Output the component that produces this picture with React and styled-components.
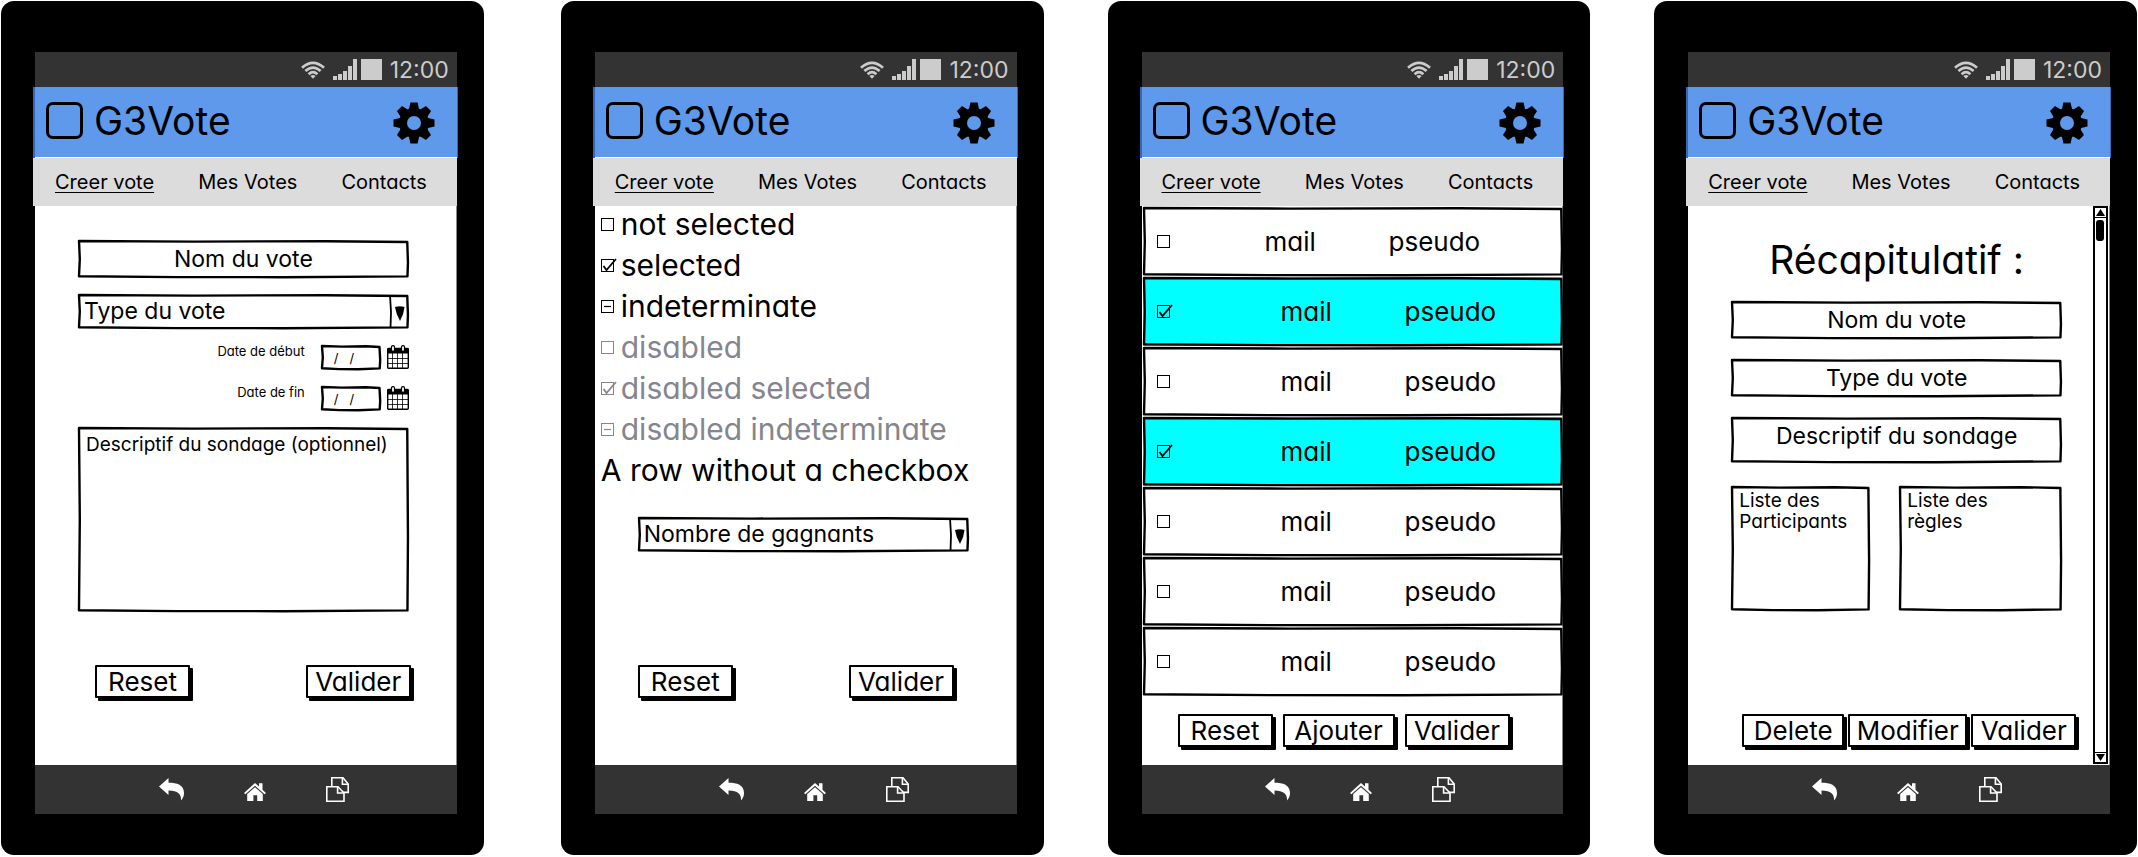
import React, { useEffect, useRef } from "react";
import styled, { createGlobalStyle, css } from "styled-components";

const GlobalStyle = createGlobalStyle`
  *, *::before, *::after { box-sizing: border-box; }
  body {
    margin: 0;
    background: #fff;
    color: #000;
    font-family: Inter, "Open Sans", sans-serif;
    font-feature-settings: "cv11";
  }
  button, input, select, textarea {
    margin: 0;
    font: inherit;
    font-feature-settings: inherit;
    color: inherit;
  }
`;

/* ---------- page and device ---------- */

const Board = styled.main`
  display: flex;
  flex-wrap: wrap;
  gap: 64px;
  min-height: 100vh;
  padding: 1px 1px 2px;
`;

const Device = styled.article`
  flex: 1 1 400px;
  min-width: 0;
  display: flex;
  flex-direction: column;
  padding: 51px 26px 41px 32px;
  border-radius: 13px;
  background: #000;

  &:first-child {
    margin-right: 13px;
  }
`;

const StatusBar = styled.div`
  display: flex;
  align-items: center;
  justify-content: flex-end;
  height: 35px;
  margin: 0 1px 0 2px;
  padding-right: 8px;
  background: #333;
  color: #ccc;
`;

const StatusIcons = styled.div`
  display: flex;
  align-items: center;
  gap: 8px;
`;

const SignalGroup = styled.div`
  display: flex;
  align-items: center;
  gap: 3px;
`;

const Battery = styled.span`
  width: 21px;
  height: 21px;
  background: #ccc;
`;

const Clock = styled.time`
  font-size: 23px;
  line-height: 24px;
`;

const AppHeader = styled.header`
  display: flex;
  align-items: center;
  height: 71px;
  padding: 0 22px 4px 11px;
  border: solid #3468b5;
  border-width: 0 1px 0 2px;
  box-shadow: inset 0 -1px 0 #fff;
  background: #5e99eb;
`;

const Logo = styled.span`
  width: 37px;
  height: 37px;
  margin-right: 11px;
  border: 3px solid #000;
  border-radius: 7px;
`;

const AppName = styled.h1`
  flex: 1;
  margin: 0;
  font-size: 39px;
  font-weight: 400;
  line-height: 40px;
`;

const IconButton = styled.button`
  display: flex;
  padding: 0;
  border: 0;
  background: none;
`;

const GearButton = styled(IconButton)`
  padding-top: 4px;
`;

const Tabs = styled.nav`
  display: flex;
  align-items: center;
  justify-content: space-between;
  height: 48px;
  margin-right: 1px;
  padding: 0 30px 0 22px;
  background: #dcdcdc;
`;

const Tab = styled.a`
  color: #000;
  font-size: 20px;
  line-height: 24px;
  text-decoration: ${(p) => (p.$active ? "underline" : "none")};
  text-decoration-thickness: 1px;
  text-underline-offset: 3px;
`;

const Screen = styled.section`
  flex: 1;
  display: flex;
  margin: 0 1px 0 2px;
  border-right: 1px solid #888;
  background: #fff;
`;

const Column = styled.div`
  flex: 1;
  min-width: 0;
  display: flex;
  flex-direction: column;
`;

const NavBar = styled.footer`
  display: flex;
  align-items: center;
  justify-content: center;
  gap: 60px;
  height: 49px;
  margin: 0 1px 0 2px;
  padding-left: 16px;
  background: #333;
`;

/* ---------- hand-drawn controls ---------- */

const Framed = styled.div`
  position: relative;
  display: flex;
  flex: ${(p) => p.$grow || "0 0 auto"};
  height: ${(p) => p.$h}px;
  width: ${(p) => (p.$w ? `${p.$w}px` : "auto")};
  background: ${(p) => p.$bg || "#fff"};
`;

const FrameLines = styled.svg`
  position: absolute;
  inset: 0;
  width: 100%;
  height: 100%;
  overflow: visible;
  pointer-events: none;
`;

function Frame({ w, h, weight = 2.4, ...rest }) {
  return (
    <FrameLines viewBox={`0 0 ${w} ${h}`} preserveAspectRatio="none" aria-hidden="true" {...rest}>
      <path
        d={`M1 1 L${w * 0.35} 1.6 L${w * 0.75} 1.2 L${w - 1.5} 2 L${w - 0.8} ${h * 0.6} L${w - 1.3} ${h - 1.6}
          L${w * 0.62} ${h - 0.8} L${w * 0.3} ${h - 0.9} L1 ${h - 1.8} L1.8 ${h * 0.5} Z`}
        fill="none"
        stroke="#000"
        strokeWidth={weight}
        strokeLinejoin="round"
      />
    </FrameLines>
  );
}

const bareControl = css`
  width: 100%;
  height: 100%;
  border: 0;
  border-radius: 0;
  outline: 0;
  background: none;
`;

const TextInput = styled.input`
  ${bareControl}
  padding: 0 8px ${(p) => p.$lift || 0}px;
  font-size: 23px;
  text-align: center;
`;

const DateInput = styled.input`
  ${bareControl}
  padding: 0 0 0 13px;
  font-size: 13px;
`;

const TextArea = styled.textarea`
  ${bareControl}
  padding: ${(p) => p.$top}px 8px 4px;
  font-size: 19px;
  line-height: 21px;
  resize: none;
  overflow: hidden;
`;

const SelectInput = styled.select`
  ${bareControl}
  appearance: none;
  padding: 0 24px 2px 6px;
  font-size: 23px;
`;

const SelectArrow = styled.svg`
  position: absolute;
  top: 0;
  right: 0;
  width: 20px;
  height: 35px;
  pointer-events: none;
`;

const PushButton = styled.button`
  width: ${(p) => p.$w}px;
  height: 33px;
  padding: 0;
  border: 2px solid #000;
  border-radius: 1px;
  background: #fff;
  box-shadow: 3px 3px 0 #000;
  font-size: 26px;
  line-height: 28px;
`;

const Actions = styled.div`
  display: flex;
  gap: ${(p) => p.$gap || 0}px;
  justify-content: ${(p) => (p.$gap ? "flex-start" : "space-between")};
  margin-top: ${(p) => p.$top}px;
  padding: 0 ${(p) => p.$right || 0}px 0 ${(p) => p.$left}px;
`;

/* ---------- tick boxes ---------- */

const TickWrap = styled.span`
  position: relative;
  display: flex;
  flex: none;
  width: 13px;
  height: 13px;
  color: ${(p) => (p.$off ? "#85858f" : "#000")};
`;

const TickInput = styled.input`
  appearance: none;
  width: 13px;
  height: 13px;
  border: 1px solid currentColor;
  background: transparent;
`;

const TickMark = styled.svg`
  position: absolute;
  left: 0;
  bottom: 0;
  width: 16px;
  height: 14px;
  pointer-events: none;
`;

function Tick({ state, disabled, ...rest }) {
  const ref = useRef(null);
  useEffect(() => {
    ref.current.indeterminate = state === "mixed";
  }, [state]);
  return (
    <TickWrap $off={disabled}>
      <TickInput ref={ref} type="checkbox" defaultChecked={state === "on"} disabled={disabled} {...rest} />
      {state === "on" && (
        <TickMark viewBox="0 0 16 14" aria-hidden="true">
          <path d="M2.5 8 L5.5 12 L15 1" fill="none" stroke="currentColor" strokeWidth="1.8" />
        </TickMark>
      )}
      {state === "mixed" && (
        <TickMark viewBox="0 0 16 14" aria-hidden="true">
          <path d="M3 7.5 H10" stroke="currentColor" strokeWidth="1.2" />
        </TickMark>
      )}
    </TickWrap>
  );
}

/* ---------- icons ---------- */

const WifiIcon = () => (
  <svg width="24" height="18" viewBox="0 0 24 18" fill="none" stroke="#ccc" strokeWidth="2.7" aria-hidden="true">
    <path d="M1 6.8 Q12 -3 23 6.8" />
    <path d="M4.4 10 Q12 3.2 19.6 10" />
    <path d="M7.6 13.2 Q12 9.200 16.4 13.2" />
    <path d="M9.4 15 Q12 13 14.6 15 L12 17.800 Z" fill="#ccc" stroke="none" />
  </svg>
);

const SignalIcon = () => (
  <svg width="25" height="21" viewBox="0 0 25 21" fill="#ccc" aria-hidden="true">
    <path d="M0 17h4v4H0zM5 15h4v6H5zM10 12h4v9h-4zM15 7h4v14h-4zM20 0h4v21h-4z" />
  </svg>
);

const GearIcon = () => (
  <svg width="42" height="42" viewBox="-21 -21 42 42" aria-hidden="true">
    {[0, 45, 90, 135].map((a) => (
      <path
        key={a}
        transform={`rotate(${a})`}
        d="M-3.6 -20.5 H3.6 L5 -14 L6.4 0 L5 14 L3.6 20.5 H-3.6 L-5 14 L-6.4 0 L-5 -14 Z"
      />
    ))}
    <circle r="15" />
    <circle r="7" fill="#5e99eb" />
  </svg>
);

const CalendarIcon = () => (
  <svg width="22" height="24" viewBox="0 0 22 24" aria-hidden="true">
    <rect x="0.7" y="3.5" width="20.6" height="19.8" rx="1" fill="#fff" stroke="#000" strokeWidth="1.4" />
    <path d="M0 3.5h22v5H0z" />
    <rect x="4.5" y="0.7" width="3" height="5.6" rx="1.4" fill="#fff" stroke="#000" strokeWidth="1.2" />
    <rect x="14.5" y="0.7" width="3" height="5.6" rx="1.4" fill="#fff" stroke="#000" strokeWidth="1.2" />
    <path d="M5.5 8v15M10.5 8v15M15.5 8v15M1 13.500h20M1 18.500h20" stroke="#000" strokeWidth="0.8" />
  </svg>
);

const BackIcon = () => (
  <svg width="25" height="25" viewBox="0 0 25 25" fill="#fff" aria-hidden="true">
    <path d="M0 9.5 L9.5 1 V5.8 C18 5.8 25 8 25 16 C25 18.500 24 21.500 22 23.500 C22.500 17 19 13.600 9.500 13.400 V18 Z" />
  </svg>
);

const HomeIcon = () => (
  <svg width="22" height="25" viewBox="0 0 22 25" fill="#fff" aria-hidden="true">
    <path d="M11 6 L15 9.600 V6.200 H18.500 V12.800 L22 16 L20.600 17.200 L11 8.800 L1.400 17.200 L0 16 Z" />
    <path d="M11 10.200 L18.800 17 V24 H13.200 V18.200 H9.400 V24 H3.200 V17 Z" />
  </svg>
);

const PagesIcon = () => (
  <svg width="23" height="25" viewBox="0 0 23 25" fill="#333" stroke="#fff" strokeWidth="1.6" aria-hidden="true">
    <path d="M5.800 0.800 H17 L22.200 7 V15.400 H5.800 Z" />
    <path d="M16.400 1 V7.200 H22" fill="none" />
    <path d="M0.800 9.800 H12 L18 16 V24.200 H0.800 Z" />
    <path d="M11.600 10 V16 H17.600" fill="none" />
  </svg>
);

/* ---------- shared device shell ---------- */

function Phone({ children }) {
  return (
    <Device>
      <StatusBar>
        <StatusIcons>
          <WifiIcon />
          <SignalGroup>
            <SignalIcon />
            <Battery />
          </SignalGroup>
          <Clock>12:00</Clock>
        </StatusIcons>
      </StatusBar>
      <AppHeader>
        <Logo />
        <AppName>G3Vote</AppName>
        <GearButton type="button" aria-label="Paramètres">
          <GearIcon />
        </GearButton>
      </AppHeader>
      <Tabs>
        <Tab href="#creer" $active>Creer vote</Tab>
        <Tab href="#votes">Mes Votes</Tab>
        <Tab href="#contacts">Contacts</Tab>
      </Tabs>
      <Screen>{children}</Screen>
      <NavBar>
        <IconButton type="button" aria-label="Retour"><BackIcon /></IconButton>
        <IconButton type="button" aria-label="Accueil"><HomeIcon /></IconButton>
        <IconButton type="button" aria-label="Applications"><PagesIcon /></IconButton>
      </NavBar>
    </Device>
  );
}

function Field({ label, height = 38, lift, readOnly }) {
  return (
    <Framed $h={height}>
      <TextInput type="text" aria-label={label} defaultValue={label} $lift={lift} readOnly={readOnly} />
      <Frame w={331} h={height} />
    </Framed>
  );
}

function Dropdown({ label }) {
  return (
    <Framed $h={35}>
      <SelectInput aria-label={label} defaultValue={label}>
        <option>{label}</option>
      </SelectInput>
      <Frame w={331} h={35} />
      <SelectArrow viewBox="0 0 20 35" aria-hidden="true">
        <path d="M1 1 L2 18 L1.500 34" fill="none" stroke="#000" strokeWidth="1.800" />
        <path d="M6 13 Q11 11.500 15.500 13 Q15 20 11 27 Q7 20 6 13 Z" />
      </SelectArrow>
    </Framed>
  );
}

/* ---------- screen 1 : vote form ---------- */

const Stack = styled.div`
  display: flex;
  flex-direction: column;
  gap: ${(p) => p.$gap}px;
  padding: ${(p) => p.$top}px ${(p) => p.$right || 47}px 0 43px;
`;

const DateList = styled.div`
  display: flex;
  flex-direction: column;
  align-items: flex-end;
  gap: 16px;
`;

const DateRow = styled.div`
  display: flex;
  align-items: flex-start;
`;

const DateLabel = styled.label`
  margin-right: 16px;
  font-size: 13px;
  line-height: 13px;
`;

const CalendarButton = styled(IconButton)`
  margin-left: 6px;
`;

function DateField({ id, label }) {
  return (
    <DateRow>
      <DateLabel htmlFor={id}>{label}</DateLabel>
      <Framed $h={25} $w={60}>
        <DateInput id={id} type="text" defaultValue="/   /" />
        <Frame w={60} h={25} />
      </Framed>
      <CalendarButton type="button" aria-label={`Choisir : ${label}`}>
        <CalendarIcon />
      </CalendarButton>
    </DateRow>
  );
}

function FormScreen() {
  return (
    <Phone>
      <Column>
        <Stack $gap={16} $top={34}>
          <Field label="Nom du vote" />
          <Dropdown label="Type du vote" />
          <DateList>
            <DateField id="date-debut" label="Date de début" />
            <DateField id="date-fin" label="Date de fin" />
          </DateList>
          <Framed $h={185}>
            <TextArea
              $top={7}
              aria-label="Descriptif du sondage"
              defaultValue="Descriptif du sondage (optionnel)"
            />
            <Frame w={331} h={185} />
          </Framed>
        </Stack>
        <Actions $top={53} $left={60} $right={45}>
          <PushButton type="reset" $w={95}>Reset</PushButton>
          <PushButton type="submit" $w={105}>Valider</PushButton>
        </Actions>
      </Column>
    </Phone>
  );
}

/* ---------- screen 2 : options ---------- */

const OptionList = styled.ul`
  display: flex;
  flex-direction: column;
  gap: 4px;
  margin: 0;
  padding: 0 6px;
  list-style: none;
  font-size: 30px;
  line-height: 37px;
`;

const OptionLabel = styled.label`
  display: flex;
  align-items: center;
  gap: 7px;
  color: ${(p) => (p.$off ? "#85858f" : "#000")};
`;

const options = [
  { text: "not selected", state: "off" },
  { text: "selected", state: "on" },
  { text: "indeterminate", state: "mixed" },
  { text: "disabled", state: "off", disabled: true },
  { text: "disabled selected", state: "on", disabled: true },
  { text: "disabled indeterminate", state: "mixed", disabled: true },
];

function OptionsScreen() {
  return (
    <Phone>
      <Column>
        <OptionList>
          {options.map((o) => (
            <li key={o.text}>
              <OptionLabel $off={o.disabled}>
                <Tick state={o.state} disabled={o.disabled} />
                {o.text}
              </OptionLabel>
            </li>
          ))}
          <li>A row without a checkbox</li>
        </OptionList>
        <Stack $gap={16} $top={28}>
          <Dropdown label="Nombre de gagnants" />
        </Stack>
        <Actions $top={113} $left={43} $right={62}>
          <PushButton type="reset" $w={95}>Reset</PushButton>
          <PushButton type="submit" $w={105}>Valider</PushButton>
        </Actions>
      </Column>
    </Phone>
  );
}

/* ---------- screen 3 : contacts ---------- */

const ContactList = styled.ul`
  display: flex;
  flex-direction: column;
  gap: 1px;
  margin: 0;
  padding: 1px 0 0 1px;
  list-style: none;
`;

const ContactRow = styled.label`
  flex: 1;
  display: grid;
  grid-template-columns: ${(p) => (p.$wide ? 124 : 108)}px 124px 1fr;
  align-items: center;
  padding-left: 14px;
  font-size: 26px;
  line-height: 32px;
`;

const contacts = [false, true, false, true, false, false, false];

function ContactsScreen() {
  return (
    <Phone>
      <Column>
        <ContactList>
          {contacts.map((on, i) => (
            <li key={i}>
              <Framed $h={69} $bg={on ? "#00ffff" : "#fff"}>
                <ContactRow $wide={i > 0}>
                  <Tick state={on ? "on" : "off"} />
                  <span>mail</span>
                  <span>pseudo</span>
                </ContactRow>
                <Frame w={420} h={69} />
              </Framed>
            </li>
          ))}
        </ContactList>
        <Actions $top={18} $left={36} $gap={10}>
          <PushButton type="reset" $w={95}>Reset</PushButton>
          <PushButton type="button" $w={112}>Ajouter</PushButton>
          <PushButton type="submit" $w={105}>Valider</PushButton>
        </Actions>
      </Column>
    </Phone>
  );
}

/* ---------- screen 4 : summary ---------- */

const SummaryTitle = styled.h2`
  margin: 0;
  font-size: 39px;
  font-weight: 400;
  line-height: 40px;
  text-align: center;
`;

const SummaryFields = styled.div`
  display: flex;
  flex-direction: column;
  gap: 20px;
  margin: 21px 0 23px;
`;

const Boxes = styled.div`
  display: flex;
  gap: 29px;
`;

const ScrollBar = styled.div`
  display: flex;
  flex-direction: column;
  width: 15px;
  margin: 0 1px 1px 0;
  border: 2px solid #000;
`;

const ScrollTrack = styled.div`
  flex: 1;
  padding: 2px 1px;
`;

const ScrollThumb = styled.div`
  width: 8px;
  height: 21px;
  border-radius: 3px;
  background: #000;
`;

const ScrollButton = styled.button`
  display: flex;
  align-items: center;
  justify-content: center;
  height: 10px;
  padding: 0;
  border: solid #000;
  border-width: ${(p) => (p.$end ? "1px 0 0" : "0 0 1px")};
  background: #fff;
`;

function SummaryScreen() {
  return (
    <Phone>
      <Column>
        <Stack $gap={0} $top={34} $right={31}>
          <SummaryTitle>Récapitulatif :</SummaryTitle>
          <SummaryFields>
            <Field label="Nom du vote" readOnly />
            <Field label="Type du vote" readOnly />
            <Field label="Descriptif du sondage" height={46} lift={8} readOnly />
          </SummaryFields>
          <Boxes>
            <Framed $h={125} $grow="139 1 0">
              <TextArea $top={4} readOnly aria-label="Liste des participants" defaultValue={"Liste des\nParticipants"} />
              <Frame w={139} h={125} />
            </Framed>
            <Framed $h={125} $grow="163 1 0">
              <TextArea $top={4} readOnly aria-label="Liste des règles" defaultValue={"Liste des\nrègles"} />
              <Frame w={163} h={125} />
            </Framed>
          </Boxes>
        </Stack>
        <Actions $top={103} $left={54} $gap={4}>
          <PushButton type="button" $w={102}>Delete</PushButton>
          <PushButton type="button" $w={119}>Modifier</PushButton>
          <PushButton type="submit" $w={105}>Valider</PushButton>
        </Actions>
      </Column>
      <ScrollBar>
        <ScrollButton type="button" aria-label="Défiler vers le haut">
          <svg width="9" height="7" viewBox="0 0 9 7" aria-hidden="true"><path d="M4.500 0 L9 7 H0 Z" /></svg>
        </ScrollButton>
        <ScrollTrack>
          <ScrollThumb />
        </ScrollTrack>
        <ScrollButton type="button" $end aria-label="Défiler vers le bas">
          <svg width="9" height="7" viewBox="0 0 9 7" aria-hidden="true"><path d="M4.500 7 L9 0 H0 Z" /></svg>
        </ScrollButton>
      </ScrollBar>
    </Phone>
  );
}

export default function App() {
  return (
    <>
      <GlobalStyle />
      <Board>
        <FormScreen />
        <OptionsScreen />
        <ContactsScreen />
        <SummaryScreen />
      </Board>
    </>
  );
}
